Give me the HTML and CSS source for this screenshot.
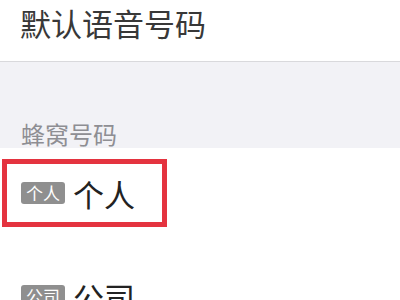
FILE: index.html
```html
<!DOCTYPE html>
<html lang="zh">
<head>
<meta charset="utf-8">
<link rel="stylesheet" href="styles.css">
</head>
<body>
<header class="header">
  <h1 class="title">默认语音号码</h1>
</header>
<section class="group">
  <div class="group-label">蜂窝号码</div>
</section>
<ul class="list">
  <li class="item item-highlight">
    <span class="badge">个人</span>
    <span class="name">个人</span>
  </li>
  <li class="item item-next">
    <span class="badge">公司</span>
    <span class="name">公司</span>
  </li>
</ul>
</body>
</html>
```

FILE: styles.css
```css
html, body {
  margin: 0;
  padding: 0;
  background: #ffffff;
  font-family: "Noto Sans CJK SC", "Noto Sans", sans-serif;
  overflow: hidden;
}
.header {
  height: 61px;
  border-bottom: 1px solid #d9d9dc;
  display: flex;
  align-items: center;
  padding-left: 20px;
  box-sizing: content-box;
}
.title {
  margin: 0;
  margin-top: -16px;
  font-size: 31px;
  font-weight: 400;
  color: #383838;
  line-height: 1;
}
.group {
  background: #f2f2f6;
  height: 86px;
  display: flex;
  align-items: flex-end;
  padding-left: 21px;
}
.group-label {
  font-size: 24px;
  color: #8e8e93;
  line-height: 1;
  margin-bottom: 2px;
}
.list {
  list-style: none;
  margin: 0;
  padding: 0;
}
.item {
  display: flex;
  align-items: center;
  gap: 8px;
}
.item-highlight {
  margin-top: 11px;
  margin-left: 2px;
  width: 165px;
  height: 68px;
  box-sizing: border-box;
  border: 5px solid #e4333f;
  padding-left: 14px;
}
.item-next {
  margin-top: 39px;
  height: 60px;
  padding-left: 21px;
}
.badge {
  background: #8f8f8f;
  color: #ffffff;
  font-size: 17px;
  line-height: 22px;
  height: 22px;
  padding: 0 5px;
  border-radius: 3px;
}
.name {
  font-size: 31px;
  color: #222222;
  line-height: 1;
}
```
